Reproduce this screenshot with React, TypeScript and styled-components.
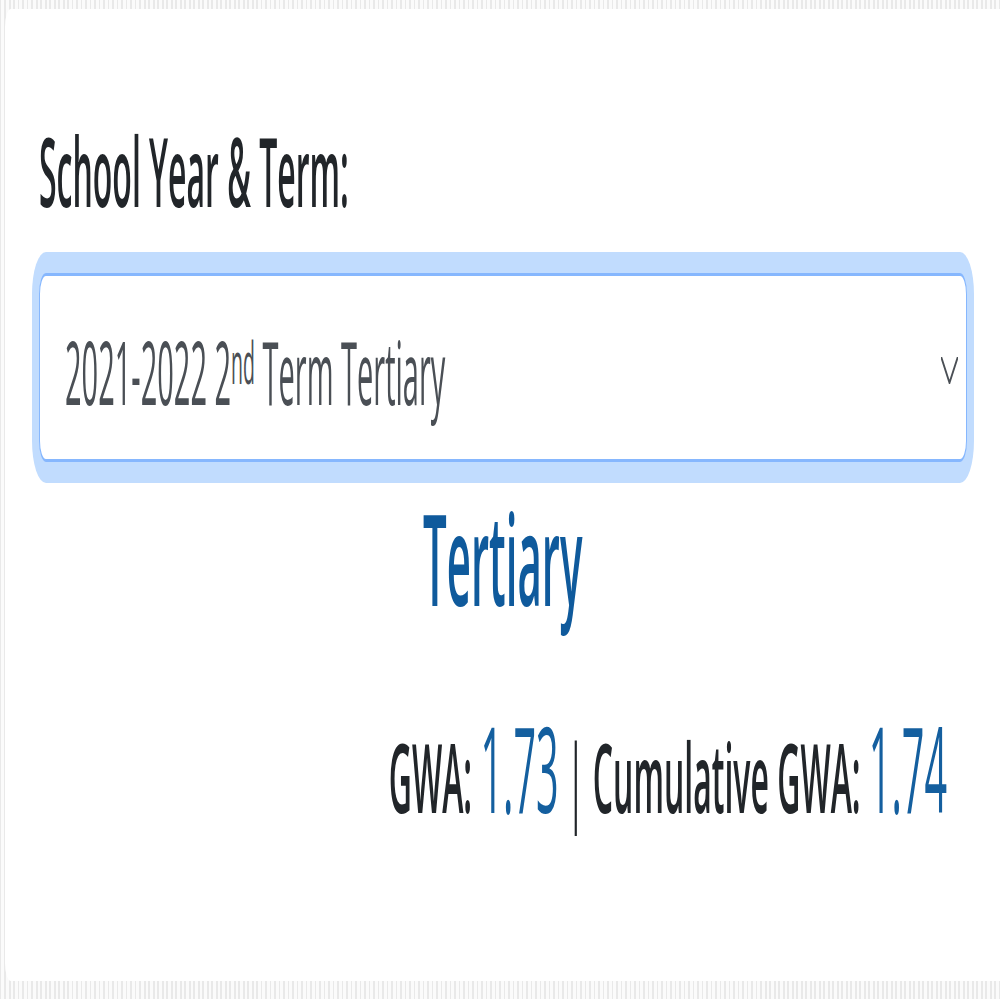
import React from "react";
import styled, { createGlobalStyle } from "styled-components";

const GlobalStyle = createGlobalStyle`
  html, body {
    margin: 0;
    padding: 0;
    background: #ffffff;
  }
  * { box-sizing: border-box; }
`;

/* Viewport-sized frame that holds the stretched stage. */
const Frame = styled.div`
  width: 1000px;
  height: 1000px;
  overflow: hidden;
`;

/* The captured view is stretched 3x vertically: the stage is laid out
   in flow and then scaled once on the Y axis. */
const Stage = styled.div`
  width: 1000px;
  height: 333.34px;
  transform: scaleY(3);
  transform-origin: 0 0;
  padding: 2.7px 0 0 4.5px;
  display: flex;
  background-color: #f6f6f6;
  background-image: repeating-linear-gradient(
    90deg,
    #e9e9e9 0px,
    #e9e9e9 1.5px,
    #fbfbfb 1.5px,
    #fbfbfb 4.5px
  );
  font-family: "Open Sans", "Noto Sans", sans-serif;
`;

const Card = styled.main`
  flex: 1;
  height: 324.3px;
  background: #ffffff;
  border-radius: 6px 0 0 6px;
  padding: 35px 33.5px 0 34.5px;
  display: flex;
  flex-direction: column;
`;

const FieldLabel = styled.label`
  display: block;
  margin: 0;
  font-size: 32px;
  line-height: 38.4px;
  font-weight: 600;
  color: #212529;
`;

const SelectBox = styled.div`
  margin-top: 14.9px;
  height: 63.3px;
  border: 1.5px solid #86b7fe;
  border-radius: 7px;
  box-shadow: 0 0 0 7px #c1dcfe;
  background: #ffffff;
  display: flex;
  align-items: center;
  justify-content: space-between;
  padding: 1.5px 7.3px 0 25px;
`;

const SelectValue = styled.span`
  font-size: 29px;
  line-height: 43.5px;
  font-weight: 400;
  color: #4a4f55;
  white-space: nowrap;
`;

const Ordinal = styled.sup`
  font-size: 19.5px;
  line-height: 0;
  vertical-align: 7px;
`;

const Chevron = styled.svg`
  width: 17px;
  height: 9px;
  flex: none;
  margin-top: 1px;
`;

const LevelTitle = styled.h4`
  margin: 5.5px 0 0;
  text-align: center;
  font-size: 42px;
  line-height: 51.6px;
  font-weight: 600;
  color: #0f5a9c;
`;

const Summary = styled.p`
  margin: 21.8px 0 0;
  padding-right: 19.5px;
  text-align: right;
  font-size: 32px;
  line-height: 46.8px;
  color: #212529;
  white-space: nowrap;
`;

const SummaryLabel = styled.span`
  font-weight: 600;
`;

const SummaryValue = styled.span`
  font-size: 39.5px;
  font-weight: 400;
  color: #145f9f;
`;

const Divider = styled.span`
  font-weight: 400;
  color: #212529;
`;

export default function App() {
  return (
    <>
      <GlobalStyle />
      <Frame>
        <Stage>
          <Card>
            <FieldLabel>School Year &amp; Term:</FieldLabel>
            <SelectBox role="combobox" aria-expanded="false">
              <SelectValue>
                2021-2022 2<Ordinal>nd</Ordinal> Term Tertiary
              </SelectValue>
              <Chevron viewBox="0 0 17 9" aria-hidden="true">
                <polyline
                  points="0.6,0.4 8.5,8.6 16.4,0.4"
                  fill="none"
                  stroke="#4a4f55"
                  strokeWidth="1.4"
                  strokeLinecap="round"
                  strokeLinejoin="round"
                  vectorEffect="non-scaling-stroke"
                />
              </Chevron>
            </SelectBox>
            <LevelTitle>Tertiary</LevelTitle>
            <Summary>
              <SummaryLabel>GWA:</SummaryLabel> <SummaryValue>1.73</SummaryValue>{" "}
              <Divider>|</Divider> <SummaryLabel>Cumulative GWA:</SummaryLabel>{" "}
              <SummaryValue>1.74</SummaryValue>
            </Summary>
          </Card>
        </Stage>
      </Frame>
    </>
  );
}
